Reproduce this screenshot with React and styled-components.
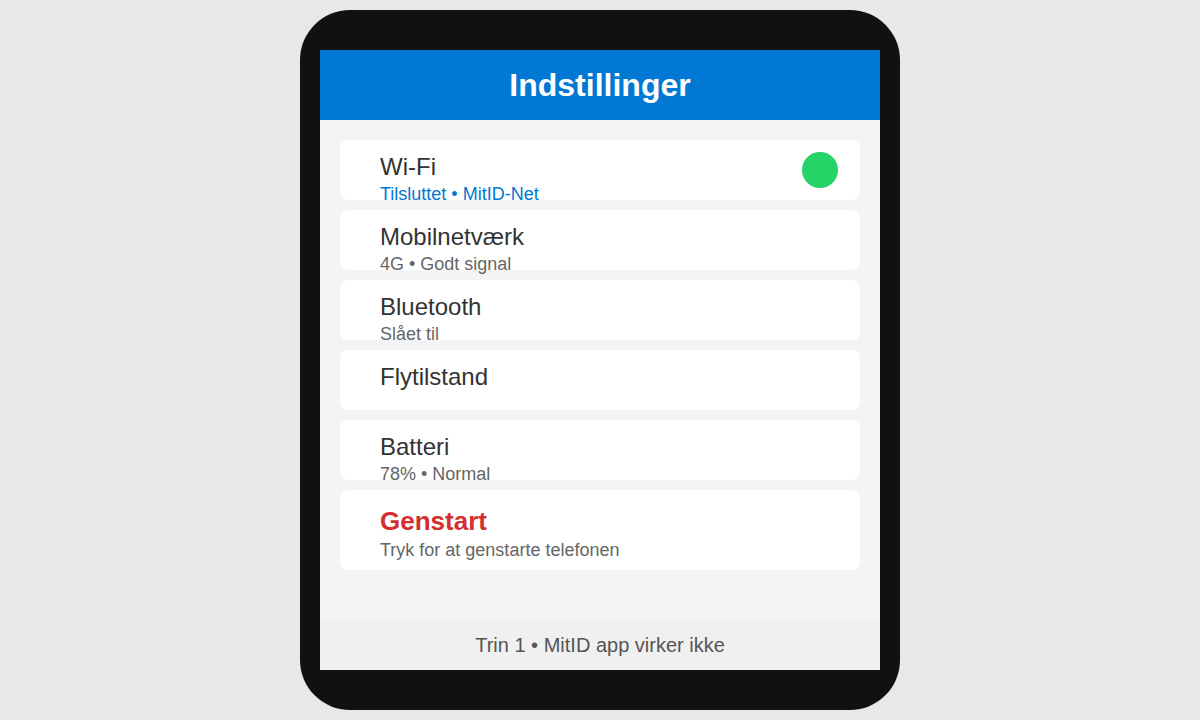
import React from 'react';
import styled, { createGlobalStyle } from 'styled-components';

const GlobalStyle = createGlobalStyle`
  * {
    box-sizing: border-box;
  }

  body {
    margin: 0;
    background: #e8e8e8;
    font-family: 'Liberation Sans', Arial, sans-serif;
  }
`;

const Page = styled.div`
  display: flex;
  align-items: center;
  justify-content: center;
  min-height: 100vh;
`;

const Phone = styled.div`
  width: 600px;
  height: 700px;
  padding: 40px 20px;
  background: #111111;
  border-radius: 50px;
`;

const Screen = styled.div`
  display: flex;
  flex-direction: column;
  height: 100%;
  background: #f4f4f4;
  overflow: hidden;
`;

const Header = styled.header`
  display: flex;
  align-items: center;
  justify-content: center;
  height: 70px;
  flex-shrink: 0;
  background: #0078d4;
  color: #ffffff;
  font-size: 32px;
  font-weight: bold;
`;

const List = styled.div`
  flex: 1;
  display: flex;
  flex-direction: column;
  gap: 10px;
  padding: 20px;
`;

const Card = styled.div`
  display: flex;
  align-items: flex-start;
  justify-content: space-between;
  height: ${(props) => (props.tall ? '80px' : '60px')};
  padding: ${(props) => (props.tall ? '16px 22px 0 40px' : '13px 22px 0 40px')};
  background: #ffffff;
  border-radius: 8px;
  position: relative;
`;

const Texts = styled.div`
  display: flex;
  flex-direction: column;
`;

const Title = styled.div`
  font-size: ${(props) => (props.danger ? '26px' : '24px')};
  font-weight: ${(props) => (props.danger ? 'bold' : 'normal')};
  color: ${(props) => (props.danger ? '#d32f2f' : '#333333')};
`;

const Subtitle = styled.div`
  font-size: 18px;
  margin-top: 3px;
  color: ${(props) => (props.accent ? '#0078d4' : '#666666')};
`;

const Dot = styled.span`
  position: absolute;
  right: 22px;
  top: 12px;
  width: 36px;
  height: 36px;
  border-radius: 50%;
  background: #25d366;
`;

const Footer = styled.footer`
  display: flex;
  align-items: center;
  justify-content: center;
  height: 50px;
  flex-shrink: 0;
  background: #f0f0f0;
  color: #555555;
  font-size: 20px;
`;

const settings = [
  { title: 'Wi-Fi', sub: 'Tilsluttet • MitID-Net', accent: true, dot: true },
  { title: 'Mobilnetværk', sub: '4G • Godt signal' },
  { title: 'Bluetooth', sub: 'Slået til' },
  { title: 'Flytilstand' },
  { title: 'Batteri', sub: '78% • Normal' },
];

const App = () => (
  <>
    <GlobalStyle />
    <Page>
      <Phone>
        <Screen>
          <Header>Indstillinger</Header>
          <List>
            {settings.map((item) => (
              <Card key={item.title}>
                <Texts>
                  <Title>{item.title}</Title>
                  {item.sub && <Subtitle accent={item.accent}>{item.sub}</Subtitle>}
                </Texts>
                {item.dot && <Dot />}
              </Card>
            ))}
            <Card tall>
              <Texts>
                <Title danger>Genstart</Title>
                <Subtitle>Tryk for at genstarte telefonen</Subtitle>
              </Texts>
            </Card>
          </List>
          <Footer>Trin 1 • MitID app virker ikke</Footer>
        </Screen>
      </Phone>
    </Page>
  </>
);

export default App;
